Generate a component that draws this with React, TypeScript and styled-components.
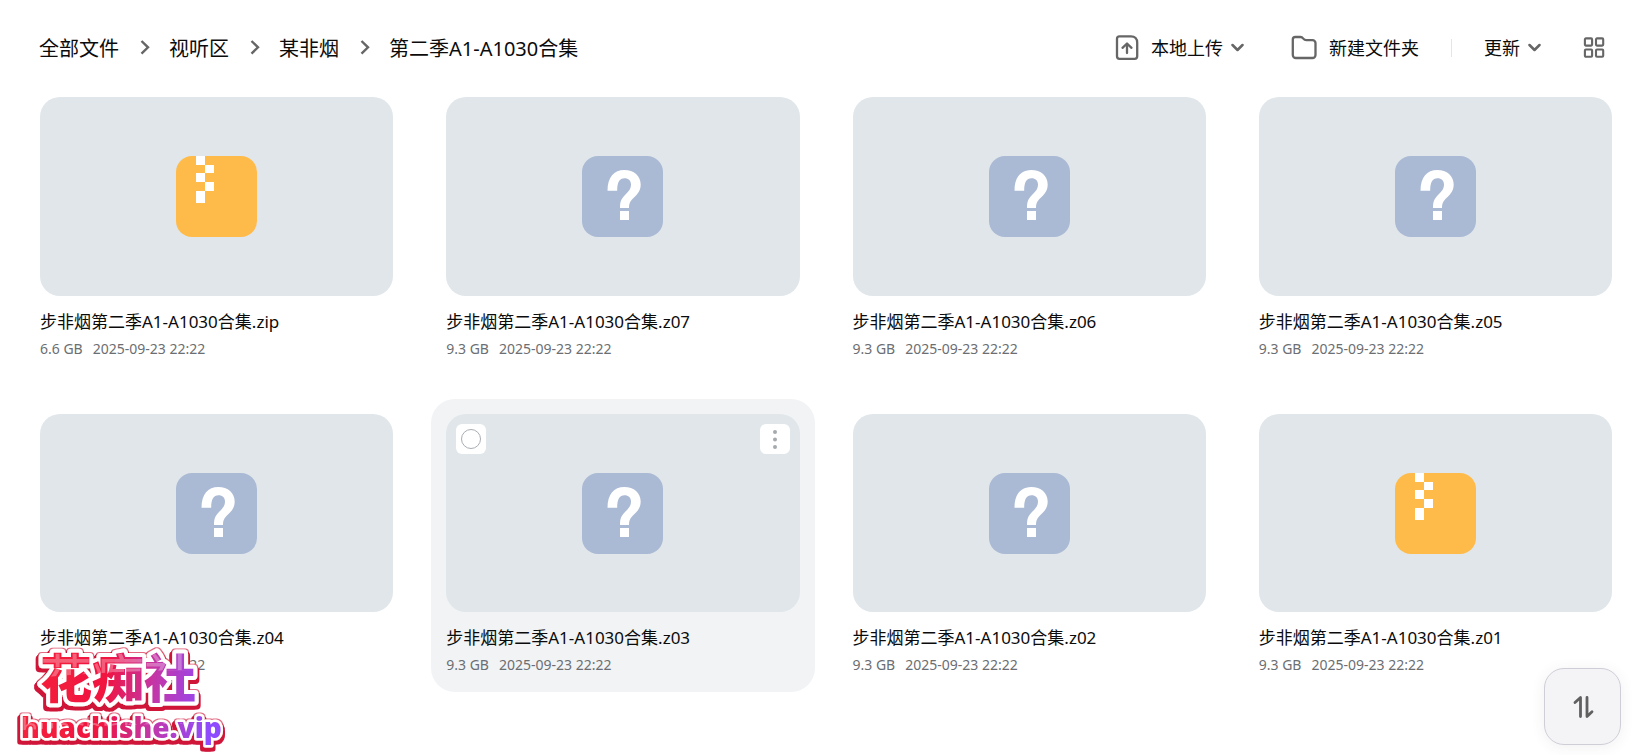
import React from 'react';
import styled, { createGlobalStyle } from 'styled-components';

const GlobalStyle = createGlobalStyle`
  * { box-sizing: border-box; }
  body {
    margin: 0;
    background: #fff;
    color: #0b0b0b;
    font-family: "Noto Sans", "Noto Sans CJK SC", sans-serif;
  }
  button { font: inherit; color: inherit; background: none; border: 0; padding: 0; cursor: pointer; }
`;

const Page = styled.div`
  min-height: 100vh;
  padding: 24px 14px 60px 25px;
`;

const Header = styled.header`
  display: flex;
  align-items: center;
  justify-content: space-between;
  height: 48px;
  margin-bottom: 10px;
  padding: 0 22px 0 14px;
`;

const Crumbs = styled.ol`
  display: flex;
  align-items: center;
  list-style: none;
  margin: 0;
  padding: 0;
`;

const Crumb = styled.li`
  display: flex;
  align-items: center;
  font-size: 20px;
  line-height: 28px;
  & > svg { margin: 0 19px 0 21px; }
`;

const CrumbLink = styled.a`
  padding-top: 2px;
  color: inherit;
  text-decoration: none;
`;

const Toolbar = styled.div`
  display: flex;
  align-items: center;
`;

const ToolButton = styled.button<{ $before?: number }>`
  display: flex;
  align-items: center;
  gap: 8px;
  margin-left: ${(p) => p.$before ?? 0}px;
  font-size: 18px;
  line-height: 24px;
  & > svg { flex: none; }
  & > svg:first-child:not(:last-child) { margin-right: 4px; }
`;

const Divider = styled.span`
  width: 1px;
  height: 18px;
  margin: 0 32px;
  background: #e3e5e8;
`;

const Grid = styled.ul`
  display: grid;
  grid-template-columns: repeat(4, minmax(0, 1fr));
  gap: 23px;
  list-style: none;
  margin: 0;
  padding: 0;
`;

const Card = styled.li<{ $active?: boolean }>`
  padding: 15px 15px 17px;
  border-radius: 24px;
  background: ${(p) => (p.$active ? '#f1f3f5' : 'transparent')};
`;

const Preview = styled.div`
  position: relative;
  display: flex;
  align-items: center;
  justify-content: center;
  aspect-ratio: 16 / 9;
  border-radius: 20px;
  background: #e0e6ea;
`;

const FileName = styled.div`
  margin-top: 14px;
  font-size: 17px;
  line-height: 24px;
  white-space: nowrap;
  overflow: hidden;
  text-overflow: ellipsis;
`;

const Meta = styled.div`
  display: flex;
  gap: 10px;
  margin-top: 5px;
  font-size: 14px;
  line-height: 20px;
  color: #6b6e72;
`;

const Corner = styled.div<{ $side: 'left' | 'right' }>`
  position: absolute;
  top: 10px;
  ${(p) => p.$side}: 10px;
  display: flex;
  align-items: center;
  justify-content: center;
  width: 30px;
  height: 30px;
  border-radius: 6px;
  background: #fff;
`;

const Check = styled.input`
  appearance: none;
  width: 20px;
  height: 20px;
  margin: 0;
  border: 1px solid #a9adb2;
  border-radius: 50%;
  &:checked { background: #aab9d4; }
`;

const MoreButton = styled.button`
  display: flex;
`;

const SortButton = styled.button`
  position: fixed;
  right: 20px;
  bottom: 10px;
  display: flex;
  align-items: center;
  justify-content: center;
  width: 77px;
  height: 77px;
  && { background: #f4f4f7; border: 1px solid #cfcdd6; }
  border-radius: 20px;
  box-shadow: 0 2px 14px rgba(60, 60, 90, 0.08);
`;

const Badge = styled.svg`
  position: fixed;
  left: 12px;
  bottom: 0;
`;

const stroke = { fill: 'none', stroke: '#666', strokeWidth: 2, strokeLinecap: 'round', strokeLinejoin: 'round' } as const;

const ChevronRight = () => (
  <svg width="10" height="16" viewBox="0 0 10 16" {...stroke} strokeWidth={2.4} strokeLinecap="butt" strokeLinejoin="miter">
    <path d="M1.500 1 8 7.300l-6.500 6.300" />
  </svg>
);

const ChevronDown = () => (
  <svg width="13" height="12" viewBox="0 0 13 12" {...stroke} strokeWidth={2.5}>
    <path d="M1.500 3 6.500 8l5-5" />
  </svg>
);

const UploadIcon = () => (
  <svg width="24" height="26" viewBox="0 0 24 26" {...stroke} strokeWidth={2.3}>
    <path d="M4.500 1.300H16C20 1.300 22.200 4 22.200 7.500V21.300a2.500 2.500 0 0 1-2.500 2.500H4.500A2.500 2.500 0 0 1 2 21.300V3.800A2.500 2.500 0 0 1 4.500 1.300Z" />
    <path d="M12 18V9M7.500 12.800 12 8.500l4.500 4.300" />
  </svg>
);

const FolderIcon = () => (
  <svg width="26" height="26" viewBox="0 0 26 26" {...stroke} strokeWidth={2.3}>
    <path d="M4.300 2h5.200c1.500 0 2 .6 2.800 1.600s1.500 1.500 3 1.500h6.200a3 3 0 0 1 3 3V20a3 3 0 0 1-3 3H4.800a3 3 0 0 1-3-3V4.500A2.500 2.500 0 0 1 4.300 2Z" />
  </svg>
);

const GridIcon = () => (
  <svg width="22" height="22" viewBox="0 0 22 22" {...stroke} strokeWidth={2.1}>
    <rect x="1.900" y="1.400" width="7.200" height="7.200" rx="1" />
    <rect x="13" y="1.400" width="7.200" height="7.200" rx="1" />
    <rect x="1.900" y="12.500" width="7.200" height="7.200" rx="1" />
    <rect x="13" y="12.500" width="7.200" height="7.200" rx="1" />
  </svg>
);

const ZipIcon = () => (
  <svg width="81" height="81" viewBox="0 0 81 81">
    <rect width="81" height="81" rx="16" fill="#ffbb49" />
    <path fill="#fff" d="M20 0h9v9h9v8h-9v9h9v9h-9v12h-9V35h9v-9h-9v-9h9V9h-9Z" />
  </svg>
);

const UnknownIcon = () => (
  <svg width="81" height="81" viewBox="0 0 81 81">
    <rect width="81" height="81" rx="16" fill="#aab9d4" />
    <path
      fill="#fff"
      d="M25.500 34.700C25.500 21 32 14 42.300 14 52 14 58.700 20 58.700 28.500 58.700 36 54 39.500 50 43.500 47.500 46 47 48.500 47 52H38C38 46 39 43 43 39 46.500 35.500 49 33 49 28.500 49 24.500 46.500 22.200 42.500 22.200 37.500 22.200 35.200 26 35.200 34.700Z"
    />
    <path fill="#fff" d="M38 55h9v9h-9z" />
  </svg>
);

const MoreIcon = () => (
  <svg width="20" height="20" viewBox="0 0 20 20" fill="#a5aaaf">
    <circle cx="10" cy="3" r="2" />
    <circle cx="10" cy="10.500" r="2" />
    <circle cx="10" cy="18" r="2" />
  </svg>
);

const SortIcon = () => (
  <svg width="22" height="24" viewBox="0 0 22 24" {...stroke} stroke="#606060" strokeWidth={2.8}>
    <path d="M3 7.500 8.500 2.500V21.500M15 2.500v19l5-4.800" />
  </svg>
);

const SiteBadge = () => (
  <Badge width="218" height="130" viewBox="0 0 218 130" role="img" aria-label="花痴社 huachishe.vip">
    <defs>
      <linearGradient id="ink" gradientUnits="userSpaceOnUse" x1="10" y1="0" x2="206" y2="20">
        <stop offset="0" stopColor="#f5243c" />
        <stop offset="0.450" stopColor="#f01440" />
        <stop offset="0.700" stopColor="#c336a8" />
        <stop offset="1" stopColor="#8e4cff" />
      </linearGradient>
      <clipPath id="letters">
        <use href="#site-name" />
        <use href="#site-host" />
      </clipPath>
      <filter id="rim" x="-10%" y="-20%" width="120%" height="150%">
        <feMorphology in="SourceAlpha" operator="dilate" radius="1" result="edge" />
        <feOffset in="edge" dx="-1" dy="2" result="near" />
        <feOffset in="edge" dx="-2" dy="3" result="far" />
        <feOffset in="edge" dx="1" dy="3" result="right" />
        <feMerge result="depth">
          <feMergeNode in="near" />
          <feMergeNode in="far" />
          <feMergeNode in="right" />
        </feMerge>
        <feFlood floodColor="#cf1238" />
        <feComposite in2="depth" operator="in" result="red" />
        <feFlood floodColor="#e46a84" />
        <feComposite in2="edge" operator="in" result="pink" />
        <feMerge>
          <feMergeNode in="pink" />
          <feMergeNode in="red" />
          <feMergeNode in="SourceGraphic" />
        </feMerge>
      </filter>
    </defs>
    <g fill="url(#ink)" stroke="#fff" strokeLinejoin="round" paintOrder="stroke" filter="url(#rim)" fontWeight="900">
      <text id="site-name" x="28" y="73" fontSize="52" strokeWidth="8" fontFamily='"Noto Sans CJK SC", sans-serif'>花痴社</text>
      <text id="site-host" x="9" y="113" fontSize="28" strokeWidth="5" fontFamily='"Noto Sans", sans-serif'>huachishe.vip</text>
    </g>
    <g clipPath="url(#letters)" fill="#fff" opacity="0.3">
      <path d="M0 20H190V45Q100 45 0 55Z" />
      <path d="M0 84H218V98Q110 98 0 106Z" />
    </g>
  </Badge>
);

const crumbs = ['全部文件', '视听区', '某非烟', '第二季A1-A1030合集'];

const files = [
  { ext: 'zip', size: '6.6 GB', zip: true },
  { ext: 'z07', size: '9.3 GB' },
  { ext: 'z06', size: '9.3 GB' },
  { ext: 'z05', size: '9.3 GB' },
  { ext: 'z04', size: '9.3 GB' },
  { ext: 'z03', size: '9.3 GB', active: true },
  { ext: 'z02', size: '9.3 GB' },
  { ext: 'z01', size: '9.3 GB', zip: true },
];

export default function App() {
  return (
    <>
      <GlobalStyle />
      <Page>
        <Header>
          <nav aria-label="路径">
            <Crumbs>
              {crumbs.map((name, i) => (
                <Crumb key={name}>
                  {i > 0 && <ChevronRight />}
                  <CrumbLink href="#">{name}</CrumbLink>
                </Crumb>
              ))}
            </Crumbs>
          </nav>
          <Toolbar>
            <ToolButton><UploadIcon /><span>本地上传</span><ChevronDown /></ToolButton>
            <ToolButton $before={47}><FolderIcon /><span>新建文件夹</span></ToolButton>
            <Divider />
            <ToolButton><span>更新</span><ChevronDown /></ToolButton>
            <ToolButton $before={42} aria-label="网格视图"><GridIcon /></ToolButton>
          </Toolbar>
        </Header>
        <main>
          <Grid>
            {files.map((file) => (
              <Card key={file.ext} $active={file.active}>
                <Preview>
                  {file.zip ? <ZipIcon /> : <UnknownIcon />}
                  {file.active && (
                    <>
                      <Corner $side="left"><Check type="checkbox" aria-label="选择文件" /></Corner>
                      <Corner $side="right"><MoreButton aria-label="更多"><MoreIcon /></MoreButton></Corner>
                    </>
                  )}
                </Preview>
                <FileName>步非烟第二季A1-A1030合集.{file.ext}</FileName>
                <Meta><span>{file.size}</span><span>2025-09-23 22:22</span></Meta>
              </Card>
            ))}
          </Grid>
        </main>
      </Page>
      <SiteBadge />
      <SortButton aria-label="排序"><SortIcon /></SortButton>
    </>
  );
}
